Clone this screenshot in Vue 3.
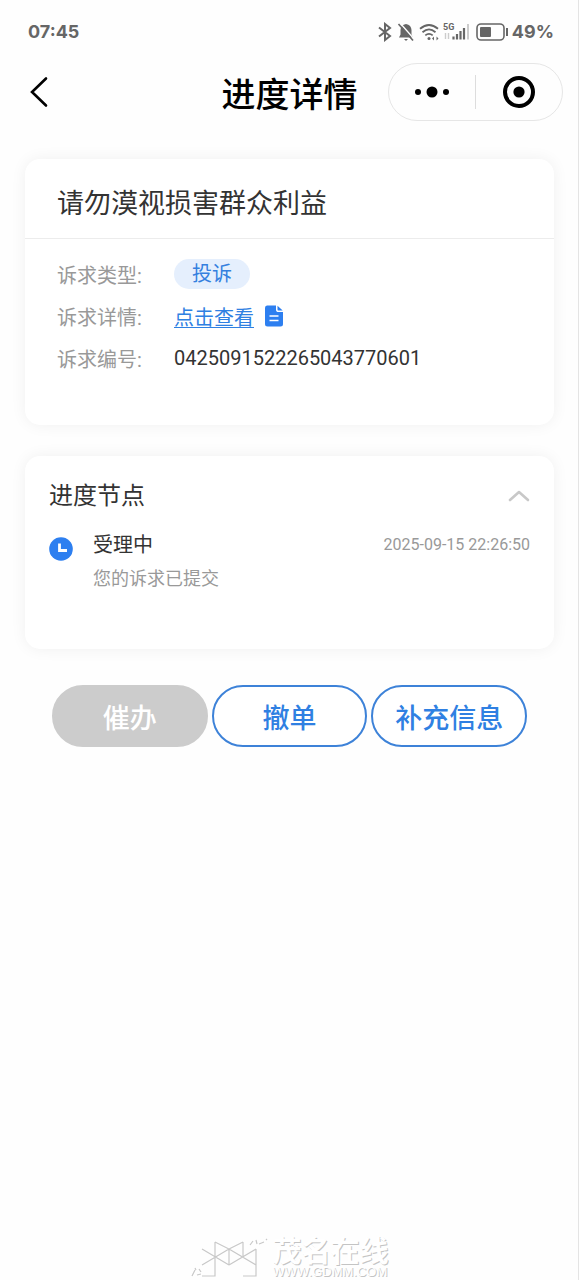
<script setup>
import { ref } from 'vue'

const open = ref(true)
const nodes = [
  { title: '受理中', note: '您的诉求已提交', time: '2025-09-15 22:26:50' },
]
</script>

<template>
  <div class="page">
    <div class="status">
      <span class="clock">07:45</span>
      <div class="indicators">
        <svg width="14" height="20" viewBox="0 0 14 20" fill="none" stroke="#666" stroke-width="2">
          <path d="M1 5.500 12 14l-5 4V2l5 4L1 14.500" />
        </svg>
        <svg class="bell" width="18" height="20" viewBox="0 0 18 20">
          <path d="M9 2c-3.500.6-5.500 3-5.500 6v4.500L2 15.500h14l-1.500-3V8c0-3-2-5.400-5.500-6zM7 17h4l-2 2z" fill="#666" />
          <path d="M3 1l15 17" stroke="#fff" stroke-width="1.400" />
          <path d="M1.500 2l14.500 16.500" stroke="#666" stroke-width="1.600" />
        </svg>
        <svg class="wifi" width="20" height="20" viewBox="0 0 20 20" fill="none" stroke="#666" stroke-width="1.800">
          <path d="M1 6.800q9-7.600 18 0M3.500 10.200q6.500-5.600 13 0M6.300 13.400q3.700-3 7.400 0" />
          <circle cx="10" cy="16.500" r="1.500" fill="#666" stroke="none" />
          <path d="M13 16.500l2-2v4zM19.500 16.500l-2-2v4z" fill="#666" stroke="none" />
        </svg>
        <svg class="signal" width="27" height="20" viewBox="0 0 27 20">
          <text x="0" y="8" font-family="Roboto, sans-serif" font-size="9" font-weight="700" fill="#666">5G</text>
          <path d="M2.500 11v6M5.500 11v6" stroke="#ccc" stroke-width="1.400" />
          <path d="M10.500 14.500v3M14 12v5.500M17.500 9v8.500M21 6v11.500" stroke="#666" stroke-width="2.200" />
          <path d="M25 2v15.500" stroke="#ccc" stroke-width="2" />
        </svg>
        <svg class="battery" width="33" height="18" viewBox="0 0 33 18">
          <rect x="1" y="1" width="27" height="16" rx="4" fill="none" stroke="#666" stroke-width="1.600" />
          <rect x="4" y="4" width="11" height="10" rx="1" fill="#666" />
          <path d="M31 5v8" stroke="#666" stroke-width="2" />
        </svg>
        <span class="percent">49%</span>
      </div>
    </div>

    <header class="nav">
      <button class="back" type="button" aria-label="返回">
        <svg width="20" height="34" viewBox="0 0 20 34" fill="none" stroke="#000" stroke-width="2.600" stroke-linecap="round">
          <path d="M17 3.500 3 17l14 13.500" />
        </svg>
      </button>
      <h1>进度详情</h1>
      <div class="capsule">
        <button type="button" aria-label="更多">
          <svg width="36" height="12" viewBox="0 0 36 12">
            <circle cx="4" cy="6" r="3" />
            <circle cx="18" cy="6" r="5.500" />
            <circle cx="32" cy="6" r="3" />
          </svg>
        </button>
        <button type="button" aria-label="关闭">
          <svg width="32" height="32" viewBox="0 0 32 32">
            <circle cx="16" cy="16" r="14" fill="none" stroke="#000" stroke-width="4" />
            <circle cx="16" cy="16" r="5.600" />
          </svg>
        </button>
      </div>
    </header>

    <main>
      <section class="card">
        <h2>请勿漠视损害群众利益</h2>
        <dl>
          <div class="row">
            <dt>诉求类型:</dt>
            <dd><span class="tag">投诉</span></dd>
          </div>
          <div class="row">
            <dt>诉求详情:</dt>
            <dd>
              <a href="#detail">点击查看</a>
              <svg class="doc" width="20" height="22" viewBox="0 0 20 22">
                <path d="M3 .5h9v4.200c0 1.400 1 2.300 2.300 2.300H19v12a2.500 2.500 0 0 1-2.500 2.500h-13A2.500 2.500 0 0 1 1 19V3A2.500 2.500 0 0 1 3 .5z" fill="#2d7ff0" />
                <path d="M13.500.8 18.700 5.600h-4a1.200 1.200 0 0 1-1.200-1.200z" fill="#2d7ff0" />
                <path d="M5.500 11h9M5.500 15.500h9" stroke="#fff" stroke-width="1.600" />
              </svg>
            </dd>
          </div>
          <div class="row">
            <dt>诉求编号:</dt>
            <dd>0425091522265043770601</dd>
          </div>
        </dl>
      </section>

      <section class="card progress">
        <button class="toggle" type="button" :aria-expanded="open" @click="open = !open">
          <span>进度节点</span>
          <svg width="22" height="12" viewBox="0 0 22 12" fill="none" stroke="#c8c8c8" stroke-width="2.600" stroke-linecap="round" stroke-linejoin="round">
            <path d="M2 10l9-8 9 8" />
          </svg>
        </button>
        <ul v-if="open">
          <li v-for="n in nodes" :key="n.time">
            <svg class="dot" width="24" height="24" viewBox="0 0 24 24">
              <circle cx="12" cy="12" r="11.800" fill="#2d7ff0" />
              <path d="M10.500 6.500v7H18" fill="none" stroke="#fff" stroke-width="2.800" />
            </svg>
            <div class="info">
              <strong>{{ n.title }}</strong>
              <p>{{ n.note }}</p>
            </div>
            <time>{{ n.time }}</time>
          </li>
        </ul>
      </section>

      <div class="actions">
        <button type="button" class="off" disabled>催办</button>
        <button type="button">撤单</button>
        <button type="button">补充信息</button>
      </div>
    </main>

    <footer>
      <svg width="84" height="46" viewBox="0 0 84 46" fill="none" stroke="#c8c8c8" stroke-width="1.200">
        <path d="M30 10v34H17M17 17l27 16M17 33l27-16M30 10l14 7v16M44 17l27 16M44 33l27-16M58 10v14M58 10l-14 7M71 17v27H58" />
        <path d="M7 44l3-6M12 43l4-1M10 36l1 2M14 37l2 3M65 13l3-4M71 8l1 4M74 12l5-2M81 7l1 1" />
      </svg>
      <div class="brand">
        <span class="name">茂名在线</span>
        <span class="url">WWW.GDMM.COM</span>
      </div>
    </footer>
  </div>
</template>

<style>
body {
  margin: 0;
  background: #fefefe;
}
</style>

<style scoped>
.page {
  box-sizing: border-box;
  min-height: 100vh;
  display: flex;
  flex-direction: column;
  border-right: 1px solid #e4e4e4;
  background: #fefefe;
  color: #333;
  font-family: Roboto, "Noto Sans CJK SC", sans-serif;
}
button {
  padding: 0;
  border: 0;
  background: none;
  color: inherit;
  font: inherit;
  cursor: pointer;
}
h1, h2, dl, dd, p, ul {
  margin: 0;
  padding: 0;
}
svg {
  flex: none;
  display: block;
}
.status {
  display: flex;
  align-items: center;
  justify-content: space-between;
  height: 63px;
  padding: 0 24px 0 28px;
  color: #666;
  font-family: Inter, sans-serif;
  font-size: 18px;
  font-weight: 700;
}
.indicators {
  display: flex;
  align-items: center;
}
.bell { margin-left: 5px; }
.wifi { margin-left: 4px; }
.signal { margin-left: 4px; }
.battery { margin-left: 6px; }
.percent { margin-left: 3px; }
.nav {
  display: grid;
  grid-template-columns: 1fr auto 1fr;
  align-items: center;
  height: 58px;
  padding: 0 15px 0 16px;
}
.back {
  display: flex;
  align-items: center;
  justify-self: start;
  width: 44px;
  height: 44px;
  padding-left: 13px;
}
h1 {
  color: #000;
  font-size: 34px;
  font-weight: 500;
}
.capsule {
  box-sizing: border-box;
  display: flex;
  justify-self: end;
  width: 175px;
  height: 58px;
  border: 1px solid #e6e6e6;
  border-radius: 29px;
  align-items: center;
}
.capsule button {
  flex: 1;
  display: flex;
  align-items: center;
  justify-content: center;
  height: 34px;
}
.capsule button + button {
  border-left: 1px solid #ddd;
}
main {
  padding: 38px 24px 0 25px;
}
.card {
  box-sizing: border-box;
  min-height: 266px;
  border-radius: 15px;
  background: #fff;
  box-shadow: 0 0 16px rgba(0, 0, 0, 0.06);
}
h2 {
  padding: 25px 32px 14px;
  border-bottom: 1px solid #ececec;
  font-size: 27px;
  line-height: 40px;
  font-weight: 400;
}
dl {
  padding: 14px 32px 0;
}
.row {
  display: flex;
  align-items: center;
  height: 42px;
  font-size: 20px;
}
dt {
  width: 117px;
  color: #999;
}
dd {
  display: flex;
  align-items: center;
}
.tag {
  padding: 0 18px;
  border-radius: 15px;
  background: #e5effd;
  color: #3480df;
  line-height: 30px;
}
a {
  color: #2f80e2;
  text-decoration: underline;
  text-decoration-thickness: 1px;
  text-underline-offset: 2px;
}
.doc {
  margin-left: 10px;
}
.progress {
  min-height: 193px;
  margin-top: 31px;
  padding: 22px 24px 24px;
}
.toggle {
  display: flex;
  align-items: center;
  justify-content: space-between;
  width: 100%;
  font-size: 24px;
  line-height: 36px;
}
ul {
  list-style: none;
}
li {
  display: flex;
  align-items: flex-start;
  padding-top: 15px;
}
.dot {
  margin-top: 8px;
}
.info {
  flex: 1;
  margin-left: 20px;
}
strong {
  display: block;
  font-size: 20px;
  line-height: 32px;
  font-weight: 400;
}
p {
  color: #999;
  font-size: 18px;
  line-height: 36px;
}
time {
  color: #999;
  font-size: 16px;
  line-height: 32px;
}
.actions {
  display: flex;
  gap: 4px;
  padding: 36px 27px 0;
}
.actions button {
  flex: 1;
  box-sizing: border-box;
  height: 62px;
  border: 2px solid #3d82d8;
  border-radius: 31px;
  background: #fff;
  color: #2f80e2;
  font-size: 27px;
  font-weight: 500;
}
.actions .off {
  border-color: #ccc;
  background: #ccc;
  color: #fff;
}
footer {
  display: flex;
  align-items: flex-end;
  justify-content: center;
  gap: 3px;
  margin-top: auto;
  padding: 24px 4px 2px 0;
}
.brand {
  display: flex;
  flex-direction: column;
  color: #fff;
  text-shadow: 1px 1px 0 #c4c4c4;
}
.name {
  font-size: 29px;
  line-height: 28px;
  font-weight: 700;
}
.url {
  font-family: "Liberation Sans", sans-serif;
  font-size: 13px;
  line-height: 12px;
}
</style>
